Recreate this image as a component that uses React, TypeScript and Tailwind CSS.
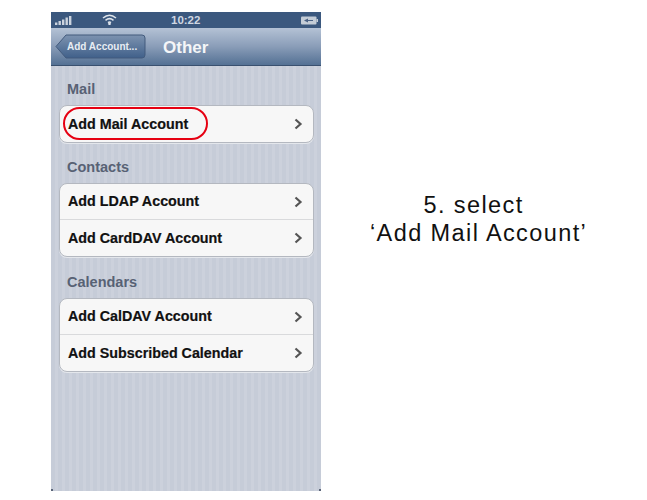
const font = "font-['Liberation_Sans',Arial,sans-serif]";

function Row({ label, last }: { label: string; last?: boolean }) {
  return (
    <div className={`flex h-[36px] items-center justify-between pl-[8px] pr-[10px] ${last ? '' : 'border-b border-[#d9dadc]'}`}>
      <span className="text-[14.3px] font-bold leading-none text-[#111] [-webkit-text-stroke:0.2px_#111]">{label}</span>
      <svg width="9" height="12" viewBox="0 0 9 12" fill="none">
        <path d="M1.5 1.5 L6.5 6 L1.5 10.5" stroke="#555" strokeWidth="2.2" />
      </svg>
    </div>
  );
}

function Group({ title, rows, className = '' }: { title: string; rows: string[]; className?: string }) {
  return (
    <div className={className}>
      <div className="mb-[7px] pl-[8px] text-[14.5px] font-bold leading-[18px] text-[#4c566a] opacity-90">{title}</div>
      <div className="rounded-[8px] border border-[#b4b8c0] bg-[#f7f7f7] shadow-[0_1px_0_#e4e7ec]">
        {rows.map((r, i) => (
          <Row key={r} label={r} last={i === rows.length - 1} />
        ))}
      </div>
    </div>
  );
}

function StatusBar() {
  return (
    <div className="relative flex h-[16px] items-center justify-between bg-[#3b587e] pl-[4px] pr-[3px]">
      <svg width="18" height="9" viewBox="0 0 18 9" fill="#cbd3de">
        <rect x="0" y="6.5" width="2.4" height="2.5" />
        <rect x="3.5" y="5" width="2.4" height="4" />
        <rect x="7" y="3.5" width="2.4" height="5.5" />
        <rect x="10.5" y="1.5" width="2.4" height="7.5" />
        <rect x="14" y="0" width="2.4" height="9" />
      </svg>
      <svg className="absolute left-[51px] top-[2px]" width="15" height="11" viewBox="0 0 15 11" fill="none" stroke="#dfe5ec" strokeWidth="1.5">
        <path d="M1 4 Q7.5 -1.5 14 4" />
        <path d="M3.5 6.3 Q7.5 3 11.5 6.3" />
        <path d="M6 8.6 Q7.5 7.4 9 8.6" />
        <circle cx="7.5" cy="9.8" r="0.6" fill="#dfe5ec" />
      </svg>
      <span className="absolute left-[120px] top-[3px] text-[11.5px] font-bold leading-none text-[#cfd7e2]">10:22</span>
      <svg width="17" height="9" viewBox="0 0 17 9">
        <rect x="0" y="0.5" width="15.5" height="8" rx="1" fill="#c4ccd6" />
        <rect x="15.5" y="3" width="1.5" height="3" fill="#c4ccd6" />
        <path d="M3 4.5 L7 2.5 L7 4 L12 4 L12 5 L7 5 L7 6.5Z" fill="#4a6285" />
      </svg>
    </div>
  );
}

function NavBar() {
  return (
    <div className="flex h-[38px] items-center border-b border-[#39506f] bg-gradient-to-b from-[#b4c2d5] via-[#8a9db8] to-[#547194]">
      <div className="relative ml-[4px] flex h-[25px] w-[91px] items-center pl-[12px] pt-[1px]">
        <svg className="absolute inset-0" width="91" height="25" viewBox="0 0 91 25">
          <defs>
            <linearGradient id="back" x1="0" y1="0" x2="0" y2="1">
              <stop offset="0" stopColor="#7d93b0" />
              <stop offset="1" stopColor="#40608a" />
            </linearGradient>
          </defs>
          <path d="M1 12.5 L11 1 H87 Q90 1 90 4 V21 Q90 24 87 24 H11 Z" fill="url(#back)" stroke="#435b7d" strokeWidth="1" />
        </svg>
        <span className="relative text-[10px] font-bold leading-none text-[#e8edf3]">Add Account...</span>
      </div>
      <span className="ml-[17px] pt-[2px] text-[17px] font-bold leading-none text-[#f4f6f8]">Other</span>
    </div>
  );
}

export default function App() {
  return (
    <div className={`flex h-[500px] w-[647px] bg-white pl-[51px] pt-[12px] ${font}`}>
      <div className="flex h-[479px] w-[270px] flex-col overflow-hidden">
        <StatusBar />
        <NavBar />
        <div className="relative flex flex-1 flex-col gap-[15px] bg-[#c8ced9] bg-[repeating-linear-gradient(90deg,#c6ccd8_0px,#c6ccd8_4px,#ccd1dc_4px,#ccd1dc_7px)] pl-[8px] pr-[7px] pt-[14px]">
          <Group title="Mail" rows={['Add Mail Account']} />
          <Group title="Contacts" rows={['Add LDAP Account', 'Add CardDAV Account']} />
          <Group title="Calendars" rows={['Add CalDAV Account', 'Add Subscribed Calendar']} className="mt-[1px]" />
          <div className="absolute left-[12px] top-[41px] h-[33px] w-[145px] rounded-[17px] border-[2.5px] border-[#e60012]" />
          <div className="absolute bottom-0 left-0 h-[2px] w-[2px] bg-[#5a6478]" />
          <div className="absolute bottom-0 right-0 h-[2px] w-[2px] bg-[#5a6478]" />
        </div>
      </div>
      <div className="ml-[49px] w-[213px] pt-[179px] text-center text-[23.5px] leading-[28px] tracking-[1.4px] text-[#111] whitespace-nowrap">
        <div className="pr-[6px]">5. select</div>
        <div>‘Add Mail Account’</div>
      </div>
    </div>
  );
}
